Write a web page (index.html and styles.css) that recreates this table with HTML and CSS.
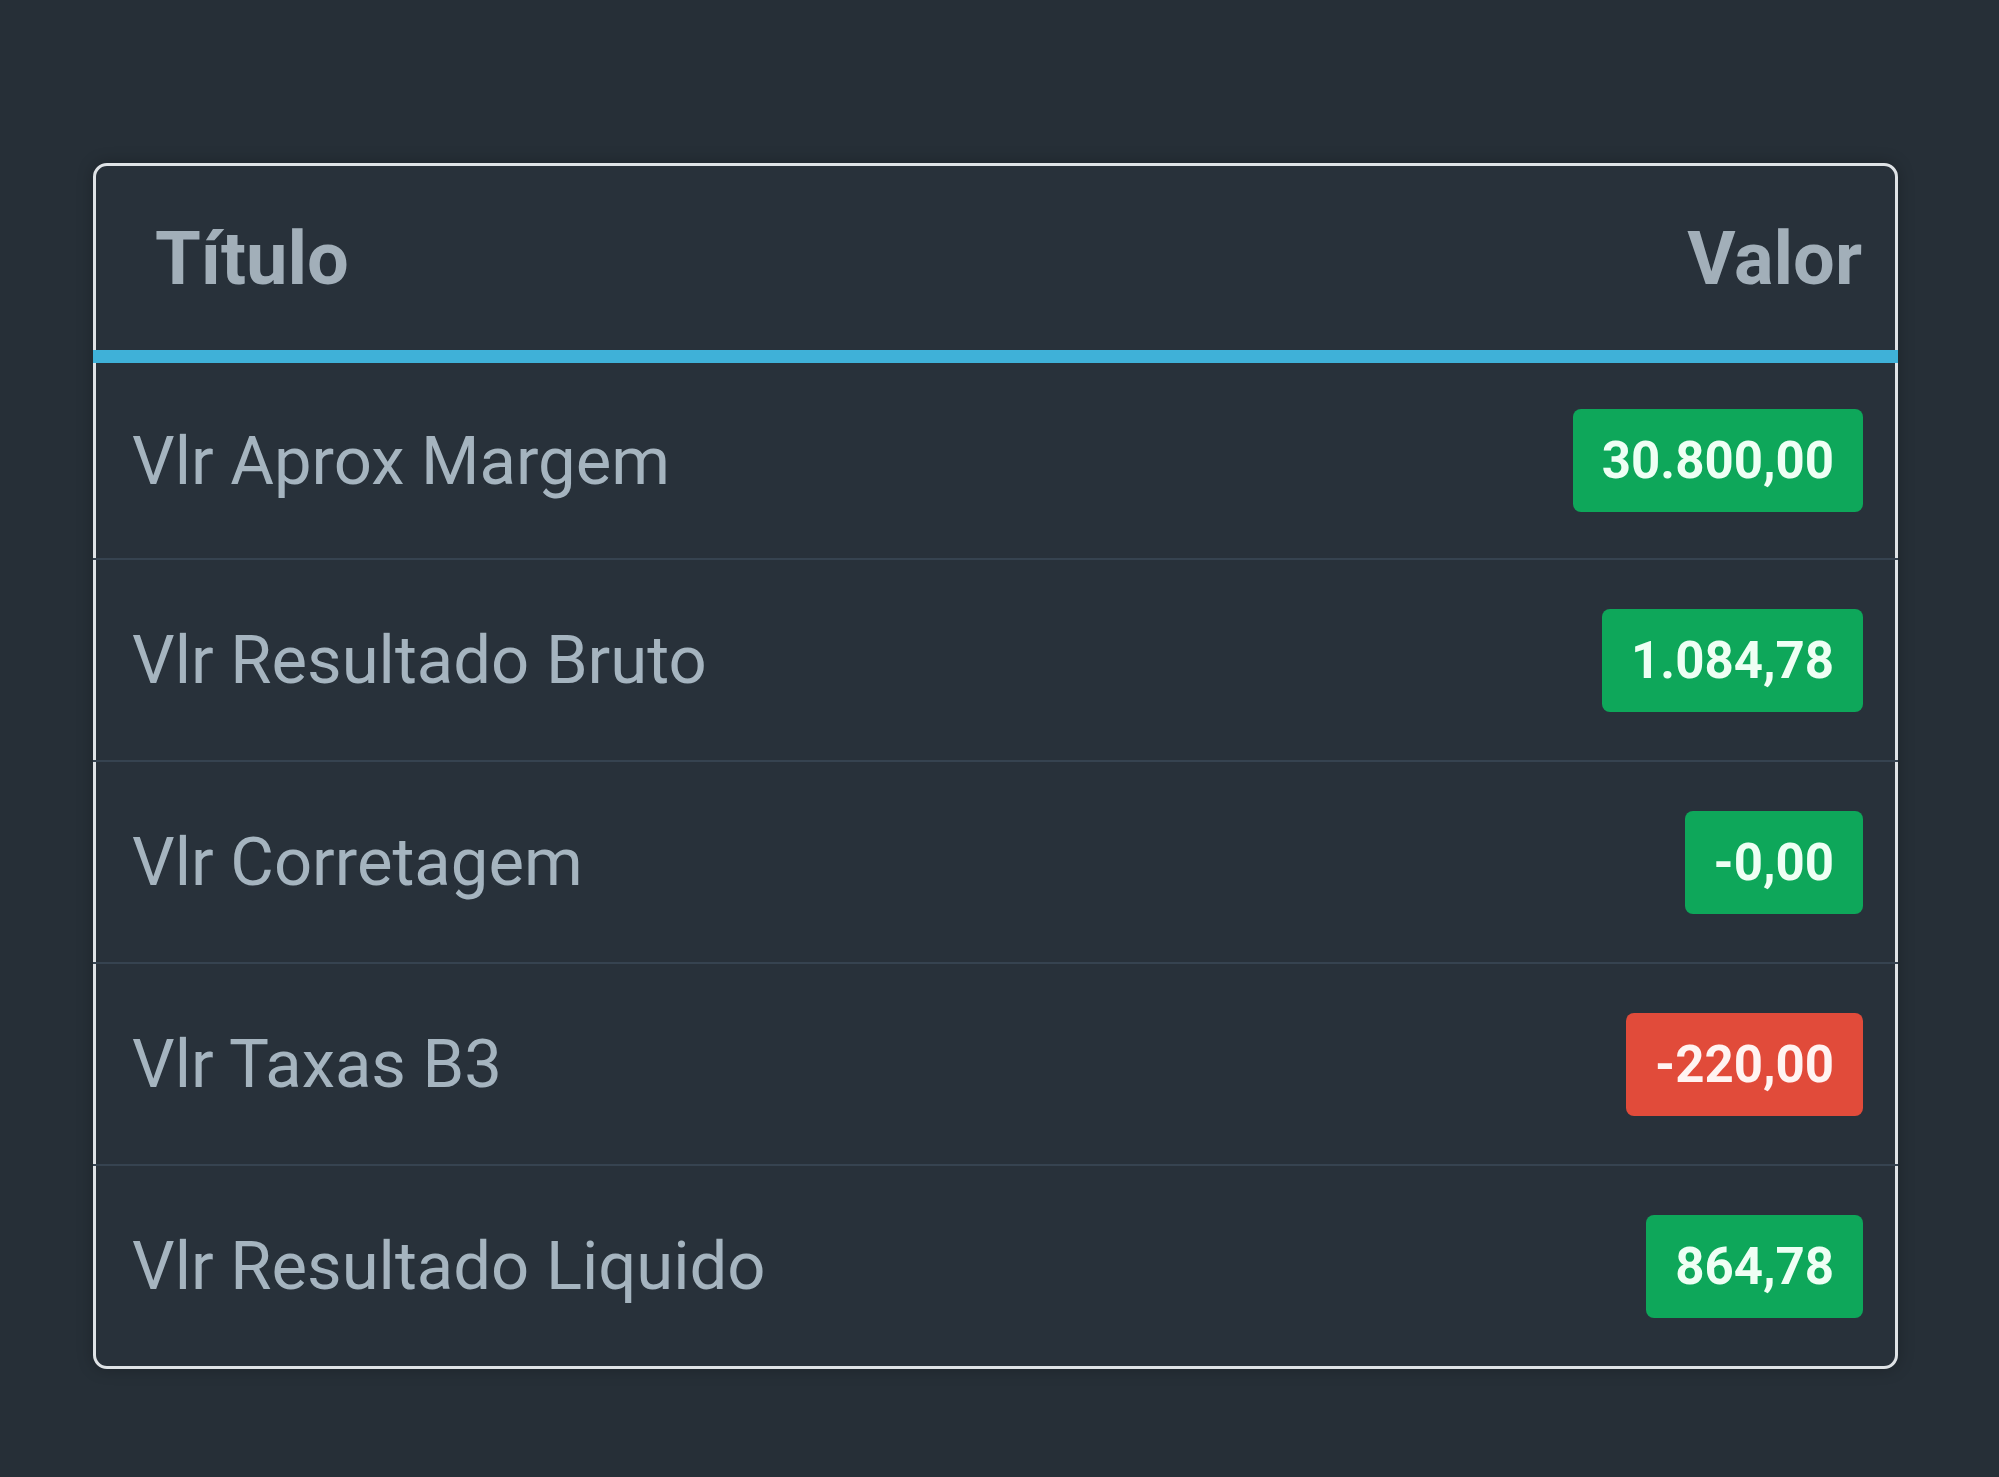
FILE: index.html
```html
<!DOCTYPE html>
<html>
<head>
    <meta charset="utf-8">
    <title> Resultado </title>
    <link rel="stylesheet" href="styles.css">
</head>
<body>
    <div class="card">
        <div class="head">
            <span>Título</span>
            <span>Valor</span>
        </div>
        <div class="rule"></div>

        <div class="row first">
            <span class="label">Vlr Aprox Margem</span>
            <span class="badge green">30.800,00</span>
        </div>
        <div class="row">
            <span class="label">Vlr Resultado Bruto</span>
            <span class="badge green">1.084,78</span>
        </div>
        <div class="row">
            <span class="label">Vlr Corretagem</span>
            <span class="badge green">-0,00</span>
        </div>
        <div class="row">
            <span class="label">Vlr Taxas B3</span>
            <span class="badge red">-220,00</span>
        </div>
        <div class="row">
            <span class="label">Vlr Resultado Liquido</span>
            <span class="badge green">864,78</span>
        </div>
    </div>
</body>
</html>
```

FILE: styles.css
```css
* {
    box-sizing: border-box;
    font-family: Roboto, "Liberation Sans", sans-serif;
}

:root {
    --page:   #262f37;
    --card:   #28313a;
    --edge:   #dfe3e6;
    --line:   #364350;
    --blue:   #3fb1d8;
    --head:   #a2afb9;
    --text:   #a5b4bf;
    --green:  #0ea75a;
    --red:    #e14b3a;
}

body {
    margin: 0;
    padding: 163px 101px 0 93px;
    min-height: 100vh;
    background-color: var( --page );
}

.card {
    border: 3px solid var( --edge );
    border-radius: 14px;
    background-color: var( --card );
    box-shadow: 0 0 16px rgba( 0, 0, 0, 0.25 );
}

.head {
    height: 184px;
    padding: 0 33px 0 59px;
    display: flex;
    align-items: center;
    justify-content: space-between;

    color: var( --head );
    font-size: 74px;
    font-weight: bold;
}

/* the blue rule and the row lines run over the side borders */
.rule {
    height: 13px;
    margin: 0 -3px;
    background-color: var( --blue );
}

.row {
    height: 202px;
    margin: 0 -3px;
    padding: 0 35px 0 39px;
    display: flex;
    align-items: center;
    justify-content: space-between;
    border-top: 2px solid var( --line );
}

.row.first {
    height: 195px;
    border-top: none;
}

.label {
    color: var( --text );
    font-size: 67px;
}

.badge {
    height: 103px;
    padding: 0 29px;
    display: flex;
    align-items: center;
    border-radius: 8px;

    color: #eefff4;
    font-size: 51px;
    font-weight: bold;
}

.green {
    background-color: var( --green );
}

.red {
    background-color: var( --red );
    color: #fff4f2;
}
```
